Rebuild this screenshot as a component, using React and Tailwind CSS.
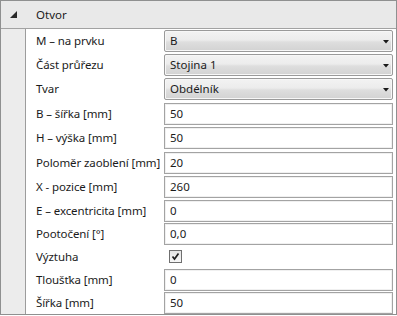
import React from "react";

const rows = [
  { label: "M – na prvku", type: "combo", value: "B", h: "h-[24px]" },
  { label: "Část průřezu", type: "combo", value: "Stojina 1", h: "h-[24px]" },
  { label: "Tvar", type: "combo", value: "Obdélník", h: "h-[24px]" },
  { label: "B – šířka [mm]", type: "text", value: "50", h: "h-[25px]" },
  { label: "H – výška [mm]", type: "text", value: "50", h: "h-[24px]" },
  { label: "Poloměr zaoblení [mm]", type: "text", value: "20", h: "h-[25px]" },
  { label: "X - pozice [mm]", type: "text", value: "260", h: "h-[24px]" },
  { label: "E – excentricita [mm]", type: "text", value: "0", h: "h-[23px]" },
  { label: "Pootočení [°]", type: "text", value: "0,0", h: "h-[23px]" },
  { label: "Výztuha", type: "check", h: "h-[23px]" },
  { label: "Tloušťka [mm]", type: "text", value: "0", h: "h-[23px]" },
  { label: "Šířka [mm]", type: "text", value: "50", h: "h-[23px]" },
];

function Combo({ value }) {
  return (
    <div className="relative flex h-[22px] w-[229px] items-center rounded-[2px] border border-[#9a9a9a] bg-[linear-gradient(to_bottom,#f3f3f3_0%,#ececec_45%,#dedede_55%,#d2d2d2_100%)] pl-[5px] shadow-[inset_0_0_0_1px_#f7f7f7]">
      <span>{value}</span>
      <svg className="absolute right-[3px] top-[9px]" width="6" height="4" viewBox="0 0 6 4">
        <polygon points="0,0 6,0 3,3.5" fill="#1a1a1a" />
      </svg>
    </div>
  );
}

function TextBox({ value }) {
  return (
    <div className="flex h-[22px] w-[229px] items-center border border-[#a3a3a3] bg-white pl-[5px] shadow-[inset_0_0_0_1px_#f0f0f0]">
      <span>{value}</span>
    </div>
  );
}

function Check() {
  return (
    <div className="flex h-[22px] w-[229px] items-center pl-[5px]">
      <div className="flex h-[13px] w-[13px] items-center justify-center border border-[#6f6f6f] bg-[linear-gradient(to_bottom,#e4e4e4,#f7f7f7)]">
        <svg width="9" height="9" viewBox="0 0 9 9">
          <path d="M1.5 4.5 L3.5 7 L7.5 1.5" stroke="#1e1e1e" strokeWidth="1.7" fill="none" />
        </svg>
      </div>
    </div>
  );
}

export default function App() {
  return (
    <div className="h-[316px] w-[397px] bg-white font-['Noto_Sans',sans-serif] text-[11.5px] leading-none text-[#1b1b1b]">
      <div className="flex h-[315px] w-[397px] flex-col border border-[#8f9090]">
        <div className="flex h-[28px] shrink-0 items-center border-b border-[#a2a2a2] bg-[#e9e9e9]">
          <svg className="ml-[9px]" width="7" height="7" viewBox="0 0 7 7">
            <polygon points="7,0 7,7 0,7" fill="#2a2a2a" />
          </svg>
          <span className="ml-[19px]">Otvor</span>
        </div>
        <div className="flex flex-1">
          <div className="w-[25px] shrink-0 border-r border-[#9c9c9c] bg-[#ececec]" />
          <div className="flex flex-1 flex-col">
            {rows.map((r, i) => (
              <div key={i} className={`flex items-center ${r.h}`}>
                <div className="w-[138px] shrink-0 pl-[10px] whitespace-nowrap tracking-[-0.1px]">{r.label}</div>
                {r.type === "combo" && <Combo value={r.value} />}
                {r.type === "text" && <TextBox value={r.value} />}
                {r.type === "check" && <Check />}
              </div>
            ))}
          </div>
        </div>
      </div>
    </div>
  );
}
